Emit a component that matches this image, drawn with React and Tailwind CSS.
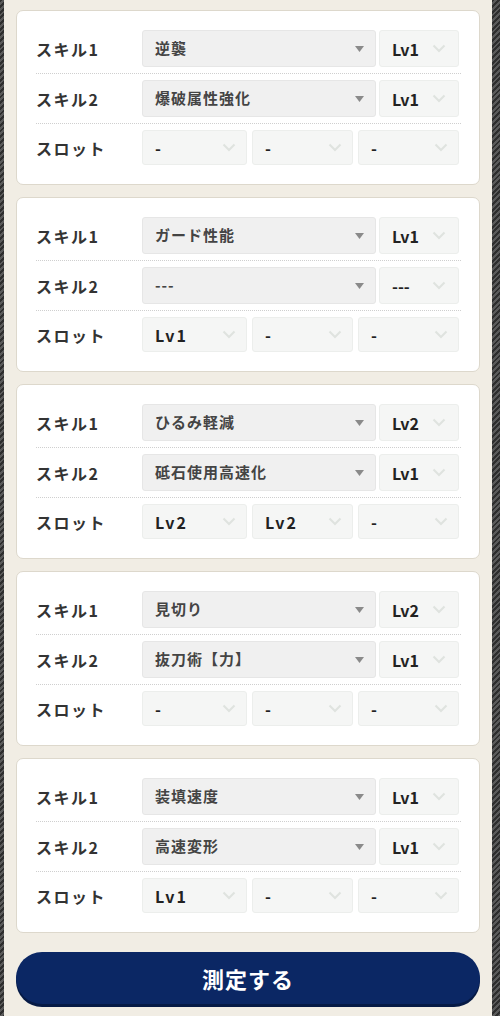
import React from 'react';

const cards = [
  { s1: '逆襲', l1: 'Lv1', s2: '爆破属性強化', l2: 'Lv1', slots: ['-', '-', '-'] },
  { s1: 'ガード性能', l1: 'Lv1', s2: '---', l2: '---', slots: ['Lv1', '-', '-'] },
  { s1: 'ひるみ軽減', l1: 'Lv2', s2: '砥石使用高速化', l2: 'Lv1', slots: ['Lv2', 'Lv2', '-'] },
  { s1: '見切り', l1: 'Lv2', s2: '抜刀術【力】', l2: 'Lv1', slots: ['-', '-', '-'] },
  { s1: '装填速度', l1: 'Lv1', s2: '高速変形', l2: 'Lv1', slots: ['Lv1', '-', '-'] },
];

const Caret = () => (
  <svg width="9" height="6" viewBox="0 0 9 6" className="shrink-0">
    <path d="M0 0h9L4.5 6z" fill="#8a8a8a" />
  </svg>
);

const Chevron = () => (
  <svg width="14" height="9" viewBox="0 0 14 9" className="shrink-0">
    <path d="M1.5 1.5l5.5 5.5 5.5-5.5" fill="none" stroke="#dfe3df" strokeWidth="2" />
  </svg>
);

const SkillSelect = ({ value }) => (
  <div className="flex-1 h-[37px] flex items-center justify-between pl-3 pr-[11px] bg-[#f0f0f0] border border-[#e6e6e6] rounded-[3px]">
    <span className="text-[15px] font-bold tracking-[1px] text-[#444]">{value}</span>
    <Caret />
  </div>
);

const LvSelect = ({ value, className }) => (
  <div className={`h-[37px] flex items-center justify-between pl-3 pr-3 bg-[#f5f6f5] border border-[#eceeec] rounded-[3px] ${className}`}>
    <span className="text-[16px] font-bold text-[#222]">{value}</span>
    <Chevron />
  </div>
);

const SlotSelect = ({ value }) => (
  <div className="h-[35px] flex items-center justify-between pl-3 pr-[10px] bg-[#f5f6f5] border border-[#eceeec] rounded-[3px]">
    <span className="text-[16px] font-bold tracking-[2px] text-[#222]">{value}</span>
    <Chevron />
  </div>
);

const Row = ({ label, last, children }) => (
  <div className={`flex items-center py-[6px] ${last ? '' : 'border-b border-dotted border-[#cfcfcf]'}`}>
    <div className="w-[106px] shrink-0 text-[16px] font-bold tracking-[1.5px] text-[#333]">{label}</div>
    <div className="flex-1 flex items-center gap-[3px] pr-[2px]">{children}</div>
  </div>
);

const Card = ({ c }) => (
  <div className="bg-white border border-[#ddd8cc] rounded-[7px] pt-[13px] pb-[13px] pl-[19px] pr-[18px]">
    <Row label="スキル1">
      <SkillSelect value={c.s1} />
      <LvSelect value={c.l1} className="w-[80px]" />
    </Row>
    <Row label="スキル2">
      <SkillSelect value={c.s2} />
      <LvSelect value={c.l2} className="w-[80px]" />
    </Row>
    <Row label="スロット" last>
      <div className="flex-1 grid grid-cols-[105px_1fr_1fr] gap-[5px]">
        {c.slots.map((s, i) => (
          <SlotSelect key={i} value={s} />
        ))}
      </div>
    </Row>
  </div>
);

export default function App() {
  return (
    <div className="w-[500px] min-h-screen flex font-['Noto_Sans_CJK_JP','Noto_Sans',sans-serif]">
      <div className="w-[4px] shrink-0 bg-[repeating-linear-gradient(135deg,#2e2e2e_0px,#2e2e2e_2px,#5a5a5a_2px,#5a5a5a_4px)]" />
      <main className="flex-1 bg-[#f1ede4] px-[12px] pt-[10px] pb-[12px]">
        <div className="flex flex-col gap-[12px]">
          {cards.map((c, i) => (
            <Card key={i} c={c} />
          ))}
        </div>
        <button className="mt-[19px] w-full h-[52px] rounded-full bg-[#0b2764] shadow-[0_3px_0_#061a45] text-white text-[22px] font-bold tracking-[1px]">
          測定する
        </button>
      </main>
      <div className="w-[8px] shrink-0 bg-[repeating-linear-gradient(135deg,#2e2e2e_0px,#2e2e2e_2px,#5a5a5a_2px,#5a5a5a_4px)]" />
    </div>
  );
}
